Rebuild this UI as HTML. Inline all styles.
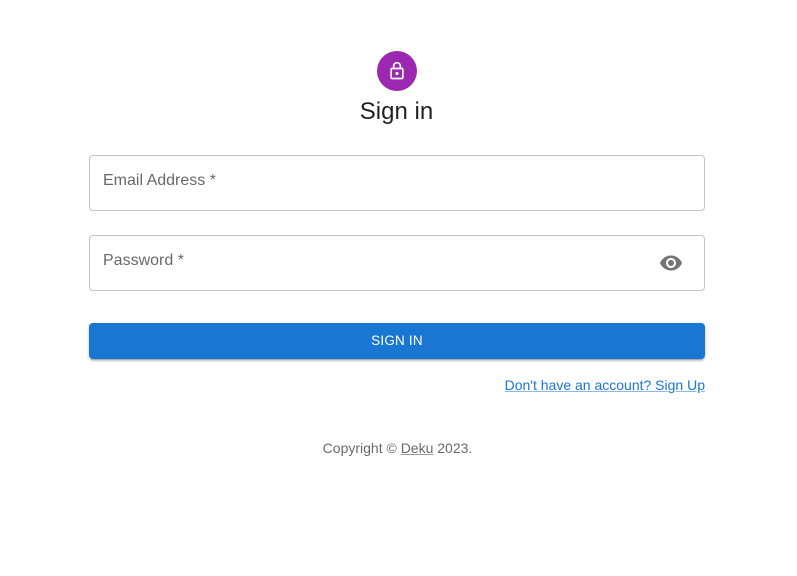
<!DOCTYPE html>
<html><head><style>
body{margin:0;background:#fff;font-family:"Liberation Sans",sans-serif;width:797px;height:576px;position:relative;overflow:hidden}
.av{position:absolute;left:377px;top:51px;width:40px;height:40px;border-radius:50%;background:#9c27b0;display:flex;align-items:center;justify-content:center}
h1{position:absolute;top:98px;left:-2px;width:797px;text-align:center;margin:0;font-size:24px;font-weight:400;color:rgba(0,0,0,.87);line-height:28px}
.f{position:absolute;left:89px;width:614px;height:54px;border:1px solid #c4c4c4;border-radius:4px}
.f span{position:absolute;left:13px;top:16px;font-size:16px;color:rgba(0,0,0,.6)}
.btn{position:absolute;left:89px;top:323px;width:616px;height:36px;background:#1976d2;border-radius:4px;color:#fff;font-size:13.5px;text-align:center;line-height:35px;letter-spacing:.2px;box-shadow:0 3px 1px -2px rgba(0,0,0,.2),0 2px 2px 0 rgba(0,0,0,.14),0 1px 5px 0 rgba(0,0,0,.12)}
.lnk{position:absolute;right:92px;top:377px;font-size:14px;color:#1976d2;text-decoration:underline;text-decoration-color:rgba(25,118,210,.5)}
.cp{position:absolute;top:440px;left:-1px;width:797px;text-align:center;font-size:14px;color:rgba(0,0,0,.6)}
.cp u{color:rgba(0,0,0,.6);text-decoration-color:rgba(0,0,0,.4)}
</style></head><body>
<div class="av"><svg width="20" height="20" viewBox="0 0 24 24"><path fill="#fff" d="M18 8h-1V6c0-2.76-2.24-5-5-5S7 3.24 7 6v2H6c-1.1 0-2 .9-2 2v10c0 1.1.9 2 2 2h12c1.1 0 2-.9 2-2V10c0-1.1-.9-2-2-2zM9 6c0-1.66 1.34-3 3-3s3 1.34 3 3v2H9V6zm9 14H6V10h12v10zm-6-3c1.1 0 2-.9 2-2s-.9-2-2-2-2 .9-2 2 .9 2 2 2z"/></svg></div>
<h1>Sign in</h1>
<div class="f" style="top:155px"><span>Email Address *</span></div>
<div class="f" style="top:235px"><span>Password *</span>
<svg style="position:absolute;left:569px;top:15px" width="24" height="24" viewBox="0 0 24 24"><path fill="#757575" d="M12 4.5C7 4.5 2.73 7.61 1 12c1.730 4.39 6 7.5 11 7.5s9.27-3.11 11-7.5c-1.73-4.39-6-7.5-11-7.5zM12 17c-2.76 0-5-2.24-5-5s2.24-5 5-5 5 2.24 5 5-2.240 5-5 5zm0-8c-1.66 0-3 1.34-3 3s1.34 3 3 3 3-1.34 3-3-1.34-3-3-3z"/></svg></div>
<div class="btn">SIGN IN</div>
<div class="lnk">Don't have an account? Sign Up</div>
<div class="cp">Copyright © <u>Deku</u> 2023.</div>
</body></html>
